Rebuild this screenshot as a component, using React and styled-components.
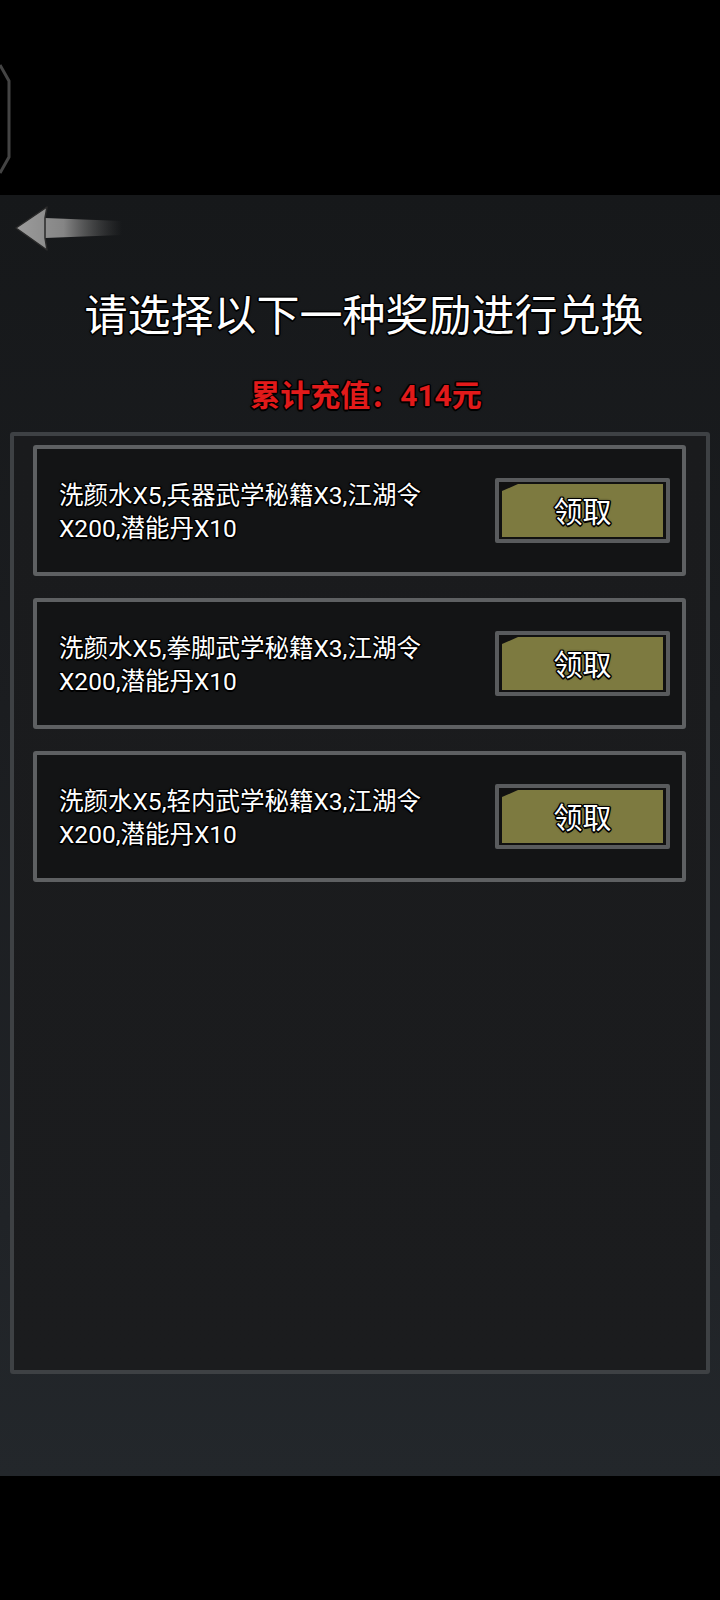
import React from 'react'
import styled, { createGlobalStyle } from 'styled-components'

const GlobalStyle = createGlobalStyle`
  html, body {
    margin: 0;
    padding: 0;
    background: #000;
  }
  body {
    font-family: Roboto, "Noto Sans CJK SC", "Noto Sans", sans-serif;
  }
`

const outline = `
  1.5px 0 0 #000, -1.5px 0 0 #000, 0 1.5px 0 #000, 0 -1.5px 0 #000,
  1px 1px 0 #000, -1px -1px 0 #000, 1px -1px 0 #000, -1px 1px 0 #000,
  0 0 3px #000
`

const rewards = [
  { id: 1, text: '洗颜水X5,兵器武学秘籍X3,江湖令X200,潜能丹X10' },
  { id: 2, text: '洗颜水X5,拳脚武学秘籍X3,江湖令X200,潜能丹X10' },
  { id: 3, text: '洗颜水X5,轻内武学秘籍X3,江湖令X200,潜能丹X10' },
]

const BackArrow = () => (
  <svg width="112" height="50" viewBox="0 0 112 50">
    <defs>
      <linearGradient id="shaft" x1="0" y1="0" x2="1" y2="0">
        <stop offset="0" stopColor="#9c9c9c" />
        <stop offset="0.45" stopColor="#858585" />
        <stop offset="1" stopColor="#555" stopOpacity="0" />
      </linearGradient>
    </defs>
    <polygon
      points="2,24 33,3 31,14 108,17 108,31 31,34 33,46"
      fill="url(#shaft)"
    />
    <polygon
      points="2,24 33,3 31,14 31,34 33,46"
      fill="none"
      stroke="#2a2a2a"
      strokeWidth="1.5"
      strokeLinejoin="round"
    />
  </svg>
)

const App = () => {
  return (
    <Wrapper>
      <GlobalStyle />
      <TopBar>
        <svg width="14" height="112" viewBox="0 0 14 112">
          <path d="M0 2 L9 18 L9 94 L0 110" fill="none" stroke="#444" strokeWidth="3" />
        </svg>
      </TopBar>

      <Main>
        <BackRow>
          <BackArrow />
        </BackRow>

        <Title>请选择以下一种奖励进行兑换</Title>
        <Total>累计充值：414元</Total>

        <Panel>
          {rewards.map((item) => (
            <Card key={item.id}>
              <RewardText>{item.text}</RewardText>
              <ClaimButton>
                <span>领取</span>
              </ClaimButton>
            </Card>
          ))}
        </Panel>
      </Main>

      <BottomBar />
    </Wrapper>
  )
}

export default App

const Wrapper = styled.div`
  width: 720px;
  height: 1600px;
  display: flex;
  flex-direction: column;
  background: #000;
  overflow: hidden;
`

const TopBar = styled.div`
  height: 195px;
  background: #000;
  padding-top: 63px;
  box-sizing: border-box;

  svg{
    display: block;
  }
`

const Main = styled.div`
  height: 1281px;
  display: flex;
  flex-direction: column;
  background: linear-gradient(180deg, #16181a 0%, #1b1d20 40%, #202327 80%, #23272b 100%);
`

const BackRow = styled.div`
  padding: 9px 0 0 14px;
  height: 50px;

  svg{
    display: block;
  }
`

const Title = styled.h1`
  margin: 38px 0 0;
  text-align: center;
  font-size: 43px;
  line-height: 48px;
  font-weight: 400;
  color: #fff;
  padding-left: 8px;
  text-shadow: ${outline};
`

const Total = styled.div`
  margin-top: 38px;
  text-align: center;
  font-size: 30px;
  line-height: 36px;
  font-weight: 700;
  color: #e11a1a;
  padding-left: 12px;
  text-shadow: ${outline};
`

const Panel = styled.div`
  margin: 18px 10px 0;
  height: 942px;
  box-sizing: border-box;
  border: 4px solid #3e4144;
  border-radius: 3px;
  background: linear-gradient(180deg, #1a1b1d 0%, #1b1c1e 100%);
  padding: 9px 20px 0 19px;
  display: flex;
  flex-direction: column;
  gap: 22px;
`

const Card = styled.div`
  height: 131px;
  box-sizing: border-box;
  border: 4px solid #5e6062;
  border-radius: 3px;
  background: #131415;
  padding: 0 12px 0 22px;
  display: flex;
  align-items: center;
  justify-content: space-between;
`

const RewardText = styled.div`
  max-width: 390px;
  font-size: 24.5px;
  line-height: 33px;
  color: #fff;
  text-shadow: ${outline};
  padding-top: 2px;
`

const ClaimButton = styled.div`
  width: 175px;
  height: 65px;
  box-sizing: border-box;
  border: 4px solid #595b5d;
  border-radius: 2px;
  background: #111;
  padding: 2px 3px;
  display: flex;

  span{
    flex: 1;
    display: flex;
    align-items: center;
    justify-content: center;
    background: #7d7a40;
    clip-path: polygon(0 7px, 16px 0, 100% 0, 100% 100%, 0 100%);
    font-size: 29px;
    color: #fff;
    text-shadow: ${outline};
    padding-bottom: 2px;
  }
`

const BottomBar = styled.div`
  flex: 1;
  background: #000;
`
